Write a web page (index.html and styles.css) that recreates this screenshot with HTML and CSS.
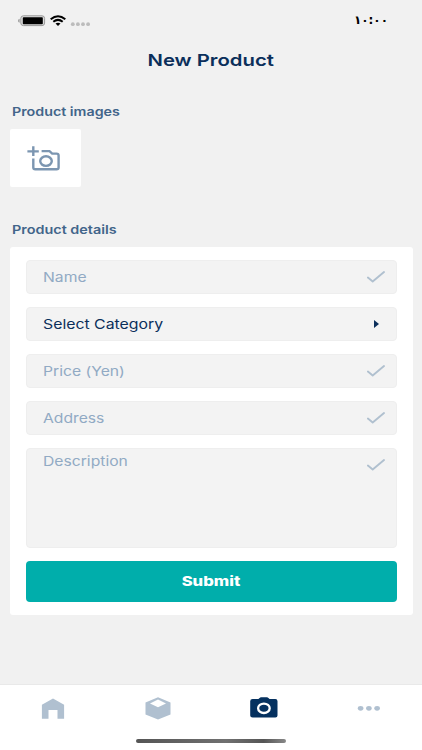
FILE: index.html
```
<!DOCTYPE html>
<html lang="en">
<head>
<meta charset="utf-8">
<meta name="viewport" content="width=device-width, initial-scale=1">
<title>New Product</title>
<link rel="stylesheet" href="styles.css">
</head>
<body>
<div class="screen">
  <header class="status">
    <svg class="status-icons" width="74" height="16" viewBox="0 0 74 16">
      <path d="M1.6 5.8Q0 6.2 0 7.8t1.6 2Z" fill="#999"/>
      <rect x="2.8" y="2.8" width="23.8" height="9.8" rx="2.6" fill="#ddd" stroke="#999" stroke-width="1"/>
      <rect x="4.8" y="4.2" width="20" height="7" rx=".8" fill="#000"/>
      <g fill="none" stroke="#000" stroke-width="2">
        <path d="M32.7 6.3Q40 .1 47.3 6.3"/>
        <path d="M35.3 8.8Q40 5 44.7 8.8"/>
      </g>
      <path d="M37.5 10.6Q40 8.9 42.5 10.6L40 13Z" fill="#000"/>
      <g fill="#bcbcbc"><circle cx="54.8" cy="11.2" r="1.9"/><circle cx="59.9" cy="11.2" r="1.9"/><circle cx="65" cy="11.2" r="1.9"/><circle cx="70.1" cy="11.2" r="1.9"/></g>
    </svg>
    <span class="clock">١٠:٠٠</span>
  </header>
  <h1 class="title"><span>New Product</span></h1>
  <main class="content">
    <h2 class="label"><span class="wide images">Product images</span></h2>
    <div class="photo">
      <svg width="34" height="26" viewBox="0 0 34 26" fill="none" stroke="#7c96b1" stroke-width="2.4">
        <path d="M.4 5.4H11.8M6.3.3V10"/>
        <path d="M6.3 12.5V21.4Q6.3 23.2 8.3 23.2H29.6Q31.6 23.2 31.6 21.4V9.5Q31.6 7.6 29.6 7.6H25.2L22.5 5.1H14.6"/>
        <ellipse cx="19" cy="15.1" rx="5.8" ry="4.8"/>
      </svg>
    </div>
    <h2 class="label details-label"><span class="wide details">Product details</span></h2>
    <form class="card">
      <div class="field"><span class="wide name">Name</span><svg class="check" width="18" height="12" viewBox="0 0 18 12"><path d="M.9 6.5 5.7 10.4 17 1.1"/></svg></div>
      <div class="field select"><span class="wide category">Select Category</span><svg class="arrow" width="5" height="8" viewBox="0 0 5 8"><path d="M0 0 5 4 0 8Z" fill="#0b2f5b"/></svg></div>
      <div class="field"><span class="wide price">Price (Yen)</span><svg class="check" width="18" height="12" viewBox="0 0 18 12"><path d="M.9 6.5 5.7 10.4 17 1.1"/></svg></div>
      <div class="field"><span class="wide address">Address</span><svg class="check" width="18" height="12" viewBox="0 0 18 12"><path d="M.9 6.5 5.7 10.4 17 1.1"/></svg></div>
      <div class="field area"><span class="wide description">Description</span><svg class="check" width="18" height="12" viewBox="0 0 18 12"><path d="M.9 6.5 5.7 10.4 17 1.1"/></svg></div>
      <button class="submit" type="button"><span>Submit</span></button>
    </form>
  </main>
  <footer class="bar">
    <nav class="tabs">
      <a class="tab"><svg width="28" height="26" viewBox="0 0 28 26"><path d="M2.9 7.8 14 1.4 25.1 7.8V21.7H18.5V13.1H9.5V21.7H2.9Z" fill="#b0c0d0"/></svg></a>
      <a class="tab"><svg width="28" height="26" viewBox="0 0 28 26"><path fill-rule="evenodd" d="M14 .2 26.5 5.4V17.4L14 22.5 1.5 17.4V5.4ZM14 2.5 6 6.5 14 10.3 22 6.5Z" fill="#b0c0d0"/></svg></a>
      <a class="tab"><svg width="28" height="26" viewBox="0 0 28 26"><path d="M2.6 2.1H8.4L10.2.5Q10.6.2 11.2.2H16.8Q17.4.2 17.8.5L19.6 2.1H25.4Q27.5 2.1 27.5 4.3V18.5Q27.5 20.5 25.4 20.5H2.6Q.2 20.5.2 18.5V4.3Q.2 2.1 2.6 2.1Z" fill="#05315f"/><ellipse cx="13.9" cy="11.3" rx="5.8" ry="4.7" fill="none" stroke="#fff" stroke-width="2.3"/></svg></a>
      <a class="tab"><svg width="28" height="26" viewBox="0 0 28 26" fill="#b0c0d0"><ellipse cx="5.6" cy="11.3" rx="2.8" ry="2.4"/><ellipse cx="13.9" cy="11.3" rx="2.8" ry="2.4"/><ellipse cx="22.1" cy="11.3" rx="2.8" ry="2.4"/></svg></a>
    </nav>
    <div class="home-indicator"></div>
  </footer>
</div>
</body>
</html>
```
FILE: styles.css
```
* { box-sizing: border-box; }
body { margin: 0; background: #f1f1f1; font-family: Inter, Roboto, "Liberation Sans", sans-serif; }
.screen { width: 422px; height: 750px; display: flex; flex-direction: column; overflow: hidden; }
.status { height: 40px; padding: 13px 34px 0 18px; display: flex; justify-content: space-between; align-items: flex-start; }
.clock { font: bold 12px/15px "DejaVu Sans", sans-serif; color: #000; }
.title { margin: 0; height: 40px; line-height: 40px; font-size: 16.5px; font-weight: 600; color: #0b2f5b; text-align: center; }
.title span { display: inline-block; transform: translateX(-0.7px) scaleX(1.23); }
.content { flex: 1; padding: 21px 9.5px 0; }
.label { margin: 0 0 7px 2px; height: 21px; line-height: 22px; font-size: 12px; font-weight: 600; color: #42658a; }
.wide { display: inline-block; transform: scaleX(1.18); transform-origin: left center; white-space: nowrap; }
.images { transform: scaleX(1.19); }
.details { transform: scaleX(1.2); }
.photo { width: 71px; height: 58px; background: #fff; border-radius: 2px; padding: 17px 0 0 17px; }
.photo svg { display: block; }
.details-label { margin-top: 32px; }
.card { margin: 0; height: 368px; padding: 13px 16px; background: #fff; border-radius: 3px; display: flex; flex-direction: column; gap: 13px; }
.field { height: 34px; flex: none; border: 1px solid #eeeeee; border-radius: 4px; background: #f3f3f3; padding: 0 11px 0 16.5px; display: flex; align-items: center; justify-content: space-between; font-size: 13.3px; line-height: 20px; color: #91aac4; }
.select { color: #0b2f5b; padding-right: 16.5px; }
.category { transform: scaleX(1.19); }
.area { height: 100px; align-items: flex-start; padding-top: 2px; }
.area .check { margin-top: 8px; }
.check path { fill: none; stroke: #b0c0cf; stroke-width: 1.9; stroke-linecap: round; stroke-linejoin: round; }
.submit { height: 41px; flex: none; border: 0; border-radius: 4px; background: #00aeab; color: #fff; font: 800 13.3px/20px Inter, sans-serif; }
.submit span { display: inline-block; transform: translate(-0.5px, -1px) scaleX(1.25); }
.bar { height: 66px; background: #fff; border-top: 1px solid #e9e9e9; }
.tabs { display: grid; grid-template-columns: repeat(4, 1fr); height: 54px; padding-top: 12px; }
.tab { display: flex; justify-content: center; align-items: flex-start; }
.home-indicator { width: 150px; height: 4px; margin: 0 auto; border-radius: 2px; background: linear-gradient(90deg, #555, #707070 60%, #555 85%, #888); }
```
